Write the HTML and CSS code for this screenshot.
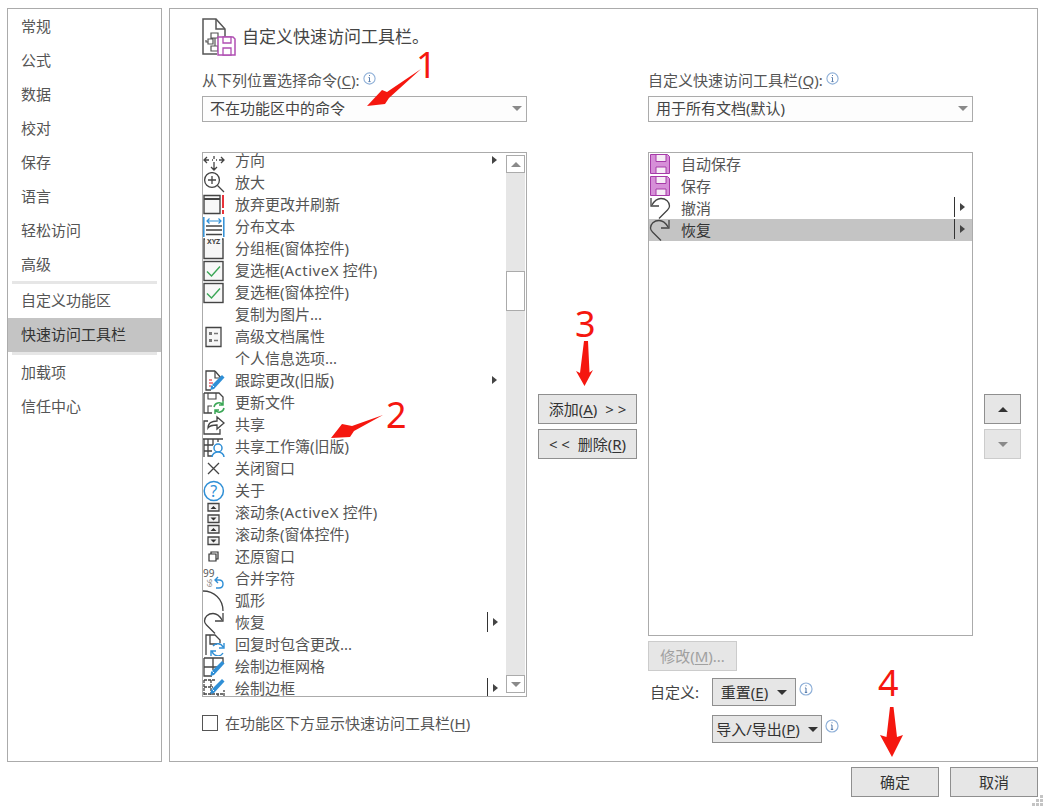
FILE: index.html
```html
<!DOCTYPE html>
<html lang="zh-CN">
<head>
<meta charset="utf-8">
<title>自定义快速访问工具栏</title>
<link rel="stylesheet" href="styles.css">
</head>
<body>
<svg class="defs" xmlns="http://www.w3.org/2000/svg">
  <symbol id="info" viewBox="0 0 13 13"><circle cx="6.5" cy="6.5" r="5.6" fill="#fff" stroke="#8fb0d8" stroke-width="1.1"/><path d="M6.5 5.5v4M5.4 9.6h2.2M5.5 5.5h1" stroke="#5b7fae" fill="none"/><path d="M6 3h1v1H6z" fill="#5b7fae"/></symbol>
  <symbol id="floppy" viewBox="0 0 22 22"><path d="M1.500 1.500h17l2 2v17h-19z" fill="#d68fd8" stroke="#a63aa8"/><path d="M7 1.500h10v7H7zM7 14h10v6.500H7z" fill="#f6ecf6" stroke="#a63aa8"/></symbol>
  <symbol id="check" viewBox="0 0 22 22"><rect x="1" y="1.500" width="19" height="19" fill="#f7f7f7" stroke="#444" stroke-width="1.400"/><path d="M4 11.500l4.500 4.500L17 6.500" fill="none" stroke="#3aa655" stroke-width="1.400"/></symbol>
  <symbol id="scrollpair" viewBox="0 0 22 22"><path d="M5 1.500h11v7.500H5zM5 13h11v7.500H5z" fill="#f2f2f2" stroke="#444" stroke-width="1.300"/><path d="M7.500 7l3-3 3 3zM7.500 15.500h6l-3 3z" fill="#333"/></symbol>
  <symbol id="redo" viewBox="0 0 22 22"><path d="M19 8C16.500 3.500 13.500 1.500 10 1.500 5 1.500 1.500 5 1.500 9c0 2 1 3 2 4l8.500 8.500" fill="none" stroke="#444" stroke-width="1.300"/><path d="M20 1v8h-8" fill="none" stroke="#444" stroke-width="1.300"/></symbol>
  <symbol id="undo" viewBox="0 0 22 22"><g transform="matrix(-1 0 0 1 22 0)"><path d="M19 8C16.500 3.500 13.500 1.500 10 1.500 5 1.500 1.500 5 1.500 9c0 2 1 3 2 4l8.500 8.500" fill="none" stroke="#444" stroke-width="1.300"/><path d="M20 1v8h-8" fill="none" stroke="#444" stroke-width="1.300"/></g></symbol>
  <symbol id="pencil" viewBox="0 0 22 22"><path d="M19 5l2.500 2.500L11 19l-3.500 1 .5-4z" fill="#2f8fd6"/><path d="M9.500 15.500l1.500 1.500" stroke="#fff"/></symbol>
</svg>

<div class="dialog">
  <div class="panes">
    <nav class="nav">
      <a class="nav-item">常规</a>
      <a class="nav-item">公式</a>
      <a class="nav-item">数据</a>
      <a class="nav-item">校对</a>
      <a class="nav-item">保存</a>
      <a class="nav-item">语言</a>
      <a class="nav-item">轻松访问</a>
      <a class="nav-item">高级</a>
      <div class="nav-sep"></div>
      <a class="nav-item">自定义功能区</a>
      <a class="nav-item active">快速访问工具栏</a>
      <div class="nav-sep after-active"></div>
      <a class="nav-item">加载项</a>
      <a class="nav-item">信任中心</a>
    </nav>

    <main class="main">
      <header class="head">
        <svg class="head-icon" viewBox="0 0 34 38" width="34" height="38">
          <path d="M23 27V11l-9-10H1v35h14" fill="#fff" stroke="#555" stroke-width="1.500"/>
          <path d="M14 1v10h9" fill="none" stroke="#555" stroke-width="1.500"/>
          <path d="M9 15h7v5H9zM6 21h5v5H6zM9 28h7v5H9zM6 24H4v-2M13 20v8" fill="none" stroke="#555" stroke-width="1.200"/>
          <path d="M16 19h15l2 2v16H16z" fill="#fff" stroke="#b04fb2" stroke-width="1.500"/>
          <path d="M21 19h8v6h-8zM21 30h8v7h-8z" fill="#fff" stroke="#b04fb2" stroke-width="1.300"/>
        </svg>
        <h1 class="title">自定义快速访问工具栏。</h1>
      </header>

      <div class="columns">
        <section class="col">
          <div class="label">从下列位置选择命令(<u>C</u>):<svg class="info label-info"><use href="#info"/></svg></div>
          <div class="select"><span>不在功能区中的命令</span><i class="tri-down"></i></div>
          <div class="list list-left">
            <ul class="rows rows-left">
              <li class="row"><svg class="ic" viewBox="0 0 22 22"><path d="M11 0v3M11 6v3M11 12v3M11 15v5M8 17l3 3 3-3M1 10h5M9 10h1M13 10h1M16 10h5M4 7l-3 3 3 3M18 7l3 3-3 3" fill="none" stroke="#444" stroke-width="1.300"/></svg><span class="t">方向</span><i class="sub"></i></li>
              <li class="row"><svg class="ic" viewBox="0 0 22 22"><circle cx="9" cy="8" r="7.400" fill="none" stroke="#444" stroke-width="1.300"/><path d="M14.500 13.500L21 20M5 8h8M9 4v8" fill="none" stroke="#444" stroke-width="1.300"/></svg><span class="t">放大</span></li>
              <li class="row"><svg class="ic" viewBox="0 0 22 22"><path d="M1 1.500h16v18H1z" fill="#f7f7f7" stroke="#444" stroke-width="1.400"/><path d="M1 5h16" stroke="#444" stroke-width="2"/><path d="M19 1h2v13h-2zM19 16h2v4h-2z" fill="#e8333a"/></svg><span class="t">放弃更改并刷新</span></li>
              <li class="row"><svg class="ic" viewBox="0 0 22 22"><path d="M.8 1v20M20.800 1v20" stroke="#2f8fd6" stroke-width="1.500"/><path d="M4 5h14M6.500 2.500L4 5l2.500 2.500M15.500 2.500L18 5l-2.500 2.500" fill="none" stroke="#2f8fd6" stroke-width="1.200"/><path d="M3 10h16M3 14h16M3 18.500h16" stroke="#444" stroke-width="1.300"/></svg><span class="t">分布文本</span></li>
              <li class="row"><svg class="ic" viewBox="0 0 22 22"><path d="M2 1H1v19.500h19V1h-1" fill="#f7f7f7" stroke="#444" stroke-width="1.400"/><text class="xyz" x="10.500" y="5.500">XYZ</text></svg><span class="t">分组框(窗体控件)</span></li>
              <li class="row"><svg class="ic"><use href="#check"/></svg><span class="t">复选框(<span class="latin">ActiveX</span> 控件)</span></li>
              <li class="row"><svg class="ic"><use href="#check"/></svg><span class="t">复选框(窗体控件)</span></li>
              <li class="row"><svg class="ic" viewBox="0 0 22 22"></svg><span class="t">复制为图片...</span></li>
              <li class="row"><svg class="ic" viewBox="0 0 22 22"><path d="M3 1.500h15v19H3z" fill="#f7f7f7" stroke="#444" stroke-width="1.300"/><path d="M6 6h3v3H6zM6 13h3v3H6z" fill="#777"/><path d="M11 7.500h4M11 14.500h4" stroke="#777" stroke-width="1.300"/></svg><span class="t">高级文档属性</span></li>
              <li class="row"><svg class="ic" viewBox="0 0 22 22"></svg><span class="t">个人信息选项...</span></li>
              <li class="row"><svg class="ic" viewBox="0 0 22 22"><path d="M12 1H3v19h5M12 1l6 7" fill="#fff" stroke="#444" stroke-width="1.300"/><path d="M12 1v7h6" fill="none" stroke="#444" stroke-width="1.200"/><path d="M6 10h3M6 13h4M6 16h2" stroke="#e8616b" stroke-width="1.300"/><use href="#pencil"/></svg><span class="t">跟踪更改(旧版)</span><i class="sub"></i></li>
              <li class="row"><svg class="ic" viewBox="0 0 22 22"><path d="M1 1h15l4 4v4M1 1v20h8" fill="none" stroke="#444" stroke-width="1.300"/><path d="M5 1v6h8V1M5 21v-7h4" fill="none" stroke="#444" stroke-width="1.100"/><path d="M11 15a5 5 0 0 1 9-2M20 9v4h-4M21 16a5 5 0 0 1-9 2M12 22v-4h4" fill="none" stroke="#3aa655" stroke-width="1.500"/></svg><span class="t">更新文件</span></li>
              <li class="row"><svg class="ic" viewBox="0 0 22 22"><path d="M5 7H1v13h16v-5" fill="none" stroke="#444" stroke-width="1.300"/><path d="M5 14c0-5 4-7 9-7V3l7 6-7 6v-4c-4 0-7 0-9 3z" fill="#fff" stroke="#444" stroke-width="1.300"/></svg><span class="t">共享</span></li>
              <li class="row"><svg class="ic" viewBox="0 0 22 22"><path d="M0 3h20M1 3v18M5 3v17h4M1 9h9M1 15h8M10 3v6M15 3v3" fill="none" stroke="#444" stroke-width="1.300"/><circle cx="15" cy="12" r="4" fill="#fff" stroke="#2f8fd6" stroke-width="1.500"/><path d="M9 21c0-3 3-5 6-5s6 2 6 5" fill="#fff" stroke="#2f8fd6" stroke-width="1.500"/></svg><span class="t">共享工作簿(旧版)</span></li>
              <li class="row"><svg class="ic" viewBox="0 0 22 22"><path d="M5 5l11 11M16 5L5 16" stroke="#444" stroke-width="1.300"/></svg><span class="t">关闭窗口</span></li>
              <li class="row"><svg class="ic" viewBox="0 0 22 22"><circle cx="10.800" cy="11" r="9.600" fill="none" stroke="#2f8fd6" stroke-width="1.500"/><text class="help" x="10.800" y="16.500">?</text></svg><span class="t">关于</span></li>
              <li class="row"><svg class="ic"><use href="#scrollpair"/></svg><span class="t">滚动条(<span class="latin">ActiveX</span> 控件)</span></li>
              <li class="row"><svg class="ic"><use href="#scrollpair"/></svg><span class="t">滚动条(窗体控件)</span></li>
              <li class="row"><svg class="ic" viewBox="0 0 22 22"><path d="M8 8V6h7v7h-2M6 8h7v7H6z" fill="#fff" stroke="#333" stroke-width="1.200"/></svg><span class="t">还原窗口</span></li>
              <li class="row"><svg class="ic" viewBox="0 0 22 22"><text class="nine" x="0" y="9">99</text><text class="six" transform="translate(4 11) rotate(90)">99</text><path d="M13 20h3c3 0 4-2 4-4s-1-4-4-4h-4M15 9l-3 3 3 3" fill="none" stroke="#2f8fd6" stroke-width="1.400"/></svg><span class="t">合并字符</span></li>
              <li class="row"><svg class="ic" viewBox="0 0 22 22"><path d="M0 1c11 0 20 8 20 20" fill="none" stroke="#444" stroke-width="1.300"/></svg><span class="t">弧形</span></li>
              <li class="row"><svg class="ic"><use href="#redo"/></svg><span class="t">恢复</span><i class="split"></i></li>
              <li class="row"><svg class="ic" viewBox="0 0 22 22"><path d="M3 21V1h9l5 5v3M7 1v9h7" fill="none" stroke="#444" stroke-width="1.300"/><path d="M9 17a6 6 0 0 0 11 2M20 13a6 6 0 0 0-10-1M21 9v5h-5M8 22v-5h5" fill="none" stroke="#2f8fd6" stroke-width="1.400"/></svg><span class="t">回复时包含更改...</span></li>
              <li class="row"><svg class="ic" viewBox="0 0 22 22"><path d="M1 2h19v5M1 2v18h8M1 11h13M10 2v12" fill="none" stroke="#444" stroke-width="1.300"/><use href="#pencil"/></svg><span class="t">绘制边框网格</span></li>
              <li class="row"><svg class="ic" viewBox="0 0 22 22"><path d="M1 2h11M1 2v20h20V12M1 9h9M1 16h20M8 2v20M15 16v6" fill="none" stroke="#444" stroke-width="1.300" stroke-dasharray="3 1"/><g transform="translate(0 -4)"><use href="#pencil"/></g></svg><span class="t">绘制边框</span><i class="split"></i></li>
            </ul>
            <div class="scroll">
              <div class="scroll-btn"><i class="tri-up"></i></div>
              <div class="track"><div class="thumb"></div></div>
              <div class="scroll-btn"><i class="tri-down"></i></div>
            </div>
          </div>
          <label class="show-below"><i class="checkbox"></i><span class="show-text">在功能区下方显示快速访问工具栏(<u>H</u>)</span></label>
        </section>

        <section class="col col-mid">
          <button class="btn wide"><span>添加(<u>A</u>)&nbsp; &gt; &gt;</span></button>
          <button class="btn wide"><span>&lt; &lt;&nbsp; 删除(<u>R</u>)</span></button>
        </section>

        <section class="col">
          <div class="label">自定义快速访问工具栏(<u>Q</u>):<svg class="info label-info"><use href="#info"/></svg></div>
          <div class="select"><span>用于所有文档(默认)</span><i class="tri-down"></i></div>
          <div class="list list-right">
            <ul class="rows">
              <li class="row"><svg class="ic"><use href="#floppy"/></svg><span class="t">自动保存</span></li>
              <li class="row"><svg class="ic"><use href="#floppy"/></svg><span class="t">保存</span></li>
              <li class="row"><svg class="ic"><use href="#undo"/></svg><span class="t">撤消</span><i class="split"></i></li>
              <li class="row selected"><svg class="ic"><use href="#redo"/></svg><span class="t">恢复</span><i class="split"></i></li>
            </ul>
          </div>
          <button class="btn modify" disabled><span>修改(<u>M</u>)...</span></button>
          <div class="custom-row">
            <span class="custom-label">自定义:</span>
            <button class="btn drop reset"><span>重置(<u>E</u>)</span><i class="tri-down dark"></i></button>
            <svg class="info"><use href="#info"/></svg>
          </div>
          <div class="custom-row second">
            <button class="btn drop export"><span>导入/导出(<u>P</u>)</span><i class="tri-down dark"></i></button>
            <svg class="info"><use href="#info"/></svg>
          </div>
        </section>

        <section class="col col-mid">
          <button class="btn updown"><i class="tri-up dark"></i></button>
          <button class="btn updown" disabled><i class="tri-down"></i></button>
        </section>
      </div>
    </main>
  </div>

  <footer class="footer">
    <button class="btn foot"><span>确定</span></button>
    <button class="btn foot"><span>取消</span></button>
  </footer>
</div>

<div class="marks">
  <svg class="marks-svg" width="1044" height="807" viewBox="0 0 1044 807">
    <path d="M421 69L389 98l-4 6-18 2 15-16 5 2z" fill="#f5170f"/>
    <path d="M383 415l-29 16-4 6-19 1 11-14 10 2z" fill="#f5170f"/>
    <path d="M584 341h4l1.500 31.500 3.500-2.500-8.500 16-8.500-15 4 2z" fill="#f5170f"/>
    <path d="M890 707h3.500l3.500 30 6-2-11 22-12-22 6.500 2z" fill="#f5170f"/>
    <path d="M1040 795h3v3h-3zM1036 799h3v3h-3zM1040 799h3v3h-3zM1032 803h3v3h-3zM1036 803h3v3h-3zM1040 803h3v3h-3z" fill="#c4c4c4"/>
  </svg>
  <span class="num num1">1</span>
  <span class="num num2">2</span>
  <span class="num num3">3</span>
  <span class="num num4">4</span>
</div>
</body>
</html>
```

FILE: styles.css
```css
* { box-sizing: border-box; }
html, body { margin: 0; padding: 0; }
body {
  width: 1044px;
  height: 807px;
  overflow: hidden;
  position: relative;
  background: #fff;
  font-family: "Noto Sans", "Noto Sans CJK SC", sans-serif;
  font-size: 15px;
  color: #555;
}
.defs { display: none; }
ul { list-style: none; margin: 0; padding: 0; }
i { display: block; font-style: normal; }
u { text-underline-offset: 2px; }
.latin { letter-spacing: .5px; }

.dialog { height: 807px; padding: 8px 6px 0 7px; display: flex; flex-direction: column; }
.panes { display: flex; gap: 7px; height: 754px; }

.nav {
  width: 155px;
  border: 1px solid #ababab;
  display: flex;
  flex-direction: column;
  padding-top: 1px;
}
.nav-item { height: 34px; line-height: 32px; padding-left: 13px; color: #555; }
.nav-item.active { background: #c4c4c4; color: #333; }
.nav-sep { height: 3px; margin: -1px 4px 0; background: #e6e6e6; }
.nav-sep.after-active { margin: 0 4px 1px; }

.main { width: 869px; border: 1px solid #ababab; padding: 9px 16px 0 32px; }
.head { display: flex; align-items: center; height: 38px; gap: 6px; }
.head-icon { flex: none; }
.title { margin: 0 0 3px; font-size: 17px; font-weight: 400; color: #444; }

.columns { display: grid; grid-template-columns: 325px 99px 325px 37px; column-gap: 11px; margin-top: 16px; }
.col { display: flex; flex-direction: column; align-items: flex-start; }
.col-mid { padding-top: 322px; gap: 5px; }

.label { height: 24px; line-height: 16px; display: flex; align-items: flex-start; color: #555; white-space: nowrap; }
.info { width: 13px; height: 13px; display: block; flex: none; }
.label-info { margin-left: 3px; }

.select {
  width: 325px;
  height: 26px;
  border: 1px solid #ababab;
  background: #fdfdfd;
  display: flex;
  align-items: center;
  justify-content: space-between;
  padding: 0 4px 3px 7px;
  color: #444;
}
.select .tri-down { margin-top: 2px; }
.tri-down { width: 0; height: 0; border-left: 5px solid transparent; border-right: 5px solid transparent; border-top: 5px solid #8a8a8a; }
.tri-up { width: 0; height: 0; border-left: 5px solid transparent; border-right: 5px solid transparent; border-bottom: 5px solid #8a8a8a; }
.tri-down.dark { border-top-color: #333; }
.tri-up.dark { border-bottom-color: #333; }

.list { width: 325px; margin-top: 30px; border: 1px solid #ababab; background: #fff; overflow: hidden; }
.list-left { height: 545px; display: flex; }
.list-right { height: 484px; }
.rows { flex: 1; min-width: 0; }
.rows-left { margin-top: -3px; }
.row { height: 22px; display: flex; align-items: center; white-space: nowrap; color: #555; }
.row.selected { background: #c4c4c4; color: #333; }
.ic { width: 22px; height: 22px; flex: none; display: block; margin-right: 10px; }
.t { flex: 1; padding-bottom: 4px; }
.list-right .t { padding-bottom: 2px; }
.sub, .split::after {
  width: 0; height: 0;
  border-left: 5px solid #444;
  border-top: 4px solid transparent;
  border-bottom: 4px solid transparent;
}
.sub { margin: 0 9px 3px 0; }
.split { height: 20px; border-left: 1px solid #333; padding-left: 5px; margin: 0 8px 2px 0; display: flex; align-items: center; }
.split::after { content: ""; display: block; }
.list-right .split { margin-right: 7px; }

.scroll { width: 19px; flex: none; margin: 2px 1px 3px 0; display: flex; flex-direction: column; }
.scroll-btn { height: 18px; border: 1px solid #ababab; background: #fff; display: flex; align-items: center; justify-content: center; flex: none; }
.track { flex: 1; background: #e6e6e6; }
.thumb { height: 40px; margin-top: 98px; background: #fff; border: 1px solid #ababab; }

.show-below { display: flex; align-items: center; gap: 7px; height: 16px; margin-top: 18px; white-space: nowrap; color: #555; }
.show-text { padding-bottom: 2px; }
.checkbox { width: 16px; height: 16px; border: 1px solid #555; background: #fff; flex: none; }

.btn {
  height: 30px;
  border: 1px solid #8f8f8f;
  background: #e6e6e6;
  color: #333;
  font: inherit;
  padding: 0;
  display: flex;
  align-items: center;
  justify-content: center;
  white-space: nowrap;
}
.btn span { padding-bottom: 2px; }
.btn[disabled] { border-color: #ccc; color: #a0a0a0; }
.wide { width: 99px; }
.updown { width: 37px; }
.modify { width: 89px; margin-top: 5px; }

.custom-row { display: flex; align-items: flex-start; height: 28px; margin-top: 7px; padding-left: 64px; }
.custom-row.second { margin-top: 9px; }
.custom-label { width: 62px; margin-left: -62px; line-height: 28px; color: #444; white-space: nowrap; }
.drop { height: 28px; gap: 9px; }
.reset { width: 84px; }
.export { width: 110px; gap: 8px; }
.custom-row .info { margin: 4px 0 0 3px; width: 14px; height: 14px; }

.footer { display: flex; justify-content: flex-end; gap: 11px; margin-top: 5px; }
.foot { width: 88px; }

.marks { position: absolute; left: 0; top: 0; width: 1044px; height: 807px; pointer-events: none; }
.marks-svg { position: absolute; left: 0; top: 0; display: block; }
.num { position: absolute; font-size: 36px; line-height: 26px; color: #f5170f; font-family: "Noto Sans", sans-serif; }
.num1 { left: 416px; top: 52px; }
.num2 { left: 386px; top: 402px; }
.num3 { left: 575px; top: 311px; }
.num4 { left: 878px; top: 670px; }

.xyz { font-size: 7px; font-weight: 700; fill: #444; text-anchor: middle; }
.help { font-size: 16px; fill: #2f8fd6; text-anchor: middle; }
.nine { font-size: 10px; fill: #555; }
.six { font-size: 7px; fill: #777; }
```
